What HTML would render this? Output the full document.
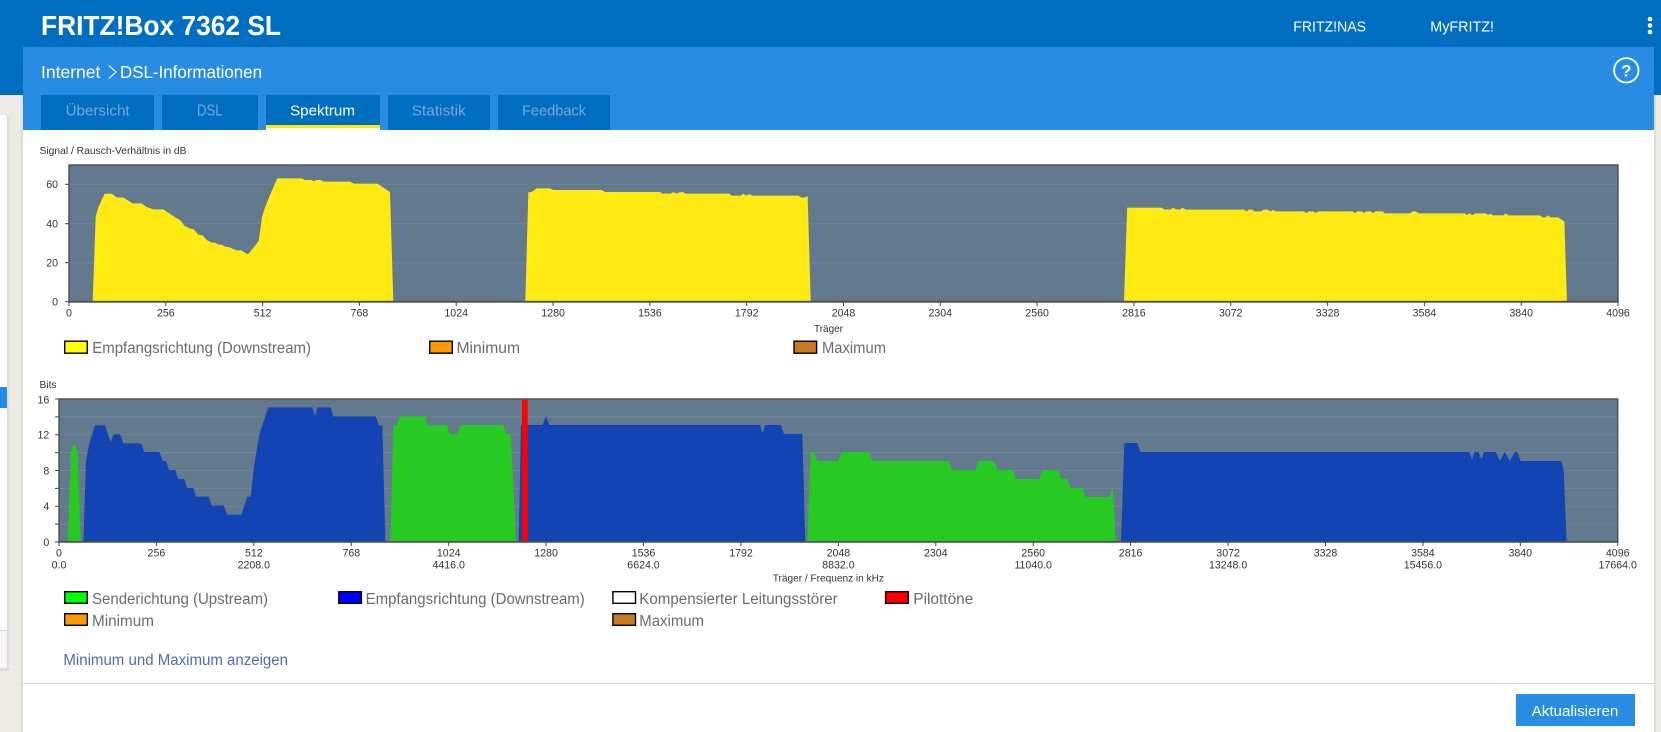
<!DOCTYPE html>
<html lang="de">
<head>
<meta charset="utf-8">
<title>FRITZ!Box 7362 SL</title>
<style>
html,body{margin:0;padding:0;width:1661px;height:732px;overflow:hidden;background:#edebe5}
svg{display:block;position:absolute;left:0;top:0}
text{font-family:"Liberation Sans",sans-serif}
.t{font-size:10.6px;fill:#333;text-anchor:middle}
.y{font-size:10.6px;fill:#333;text-anchor:end}
.s{font-size:10.2px;fill:#333}
.l{font-size:15.5px;fill:#6b6b6b}
.tab{font-size:15px;fill:#78a6d7}
.g{stroke:#71869a;stroke-width:1}
.k{stroke:#444;stroke-width:1}
.sw{stroke:#000;stroke-width:1.4}
</style>
</head>
<body>
<svg width="1661" height="732" viewBox="0 0 1661 732" xmlns="http://www.w3.org/2000/svg">
<defs>
<linearGradient id="sh" x1="0" x2="1" y1="0" y2="0"><stop offset="0" stop-color="#d8d6d0"/><stop offset="1" stop-color="#edebe5"/></linearGradient>
<linearGradient id="sh2" x1="1" x2="0" y1="0" y2="0"><stop offset="0" stop-color="#d8d6d0"/><stop offset="1" stop-color="#edebe5"/></linearGradient>
</defs>
<rect width="1661" height="732" fill="#edebe5"/>
<rect x="7" y="115" width="3" height="556" fill="url(#sh)"/>
<rect x="0" y="115" width="7" height="515" fill="#fff"/>
<rect x="0" y="630" width="7" height="38" fill="#f7f6f3"/>
<rect x="0" y="630" width="7" height="1" fill="#d8d8d8"/>
<rect x="0" y="668" width="10" height="3" fill="#dddbd5"/>
<rect x="0" y="387" width="7" height="21" fill="#288ce2"/>
<rect x="0" y="0" width="1661" height="95" fill="#006ec0"/>
<rect x="20" y="95" width="3" height="637" fill="url(#sh2)"/>
<rect x="1654" y="95" width="3" height="637" fill="url(#sh)"/>
<rect x="23" y="47" width="1631" height="83" fill="#288ce2"/>
<rect x="23" y="130" width="1631" height="602" fill="#fff"/>

<text x="41" y="35" font-size="28" font-weight="700" fill="#fff" textLength="240" lengthAdjust="spacingAndGlyphs">FRITZ!Box 7362 SL</text>
<text x="1293.3" y="31.3" font-size="15" fill="#fff" textLength="72.7" lengthAdjust="spacingAndGlyphs">FRITZ!NAS</text>
<text x="1430.3" y="31.3" font-size="15" fill="#fff" textLength="63.7" lengthAdjust="spacingAndGlyphs">MyFRITZ!</text>
<circle cx="1650" cy="19" r="2.3" fill="#fff"/><circle cx="1650" cy="25.5" r="2.3" fill="#fff"/><circle cx="1650" cy="32" r="2.3" fill="#fff"/>

<text x="41" y="78" font-size="17.5" fill="#fff" textLength="59.4" lengthAdjust="spacingAndGlyphs">Internet</text>
<path d="M108.9 65.5 L116 72 L108.9 78.5" fill="none" stroke="#fff" stroke-width="1.1"/>
<text x="120" y="78" font-size="17.5" fill="#fff" textLength="142" lengthAdjust="spacingAndGlyphs">DSL-Informationen</text>
<circle cx="1626.3" cy="70.3" r="12.2" fill="none" stroke="#fff" stroke-width="1.8"/>
<text x="1626.3" y="76.5" font-size="17" font-weight="700" fill="#fff" text-anchor="middle">?</text>

<rect x="41" y="95" width="113" height="35" fill="#006ec0"/>
<rect x="162" y="95" width="96" height="35" fill="#006ec0"/>
<rect x="266" y="95" width="114" height="33" fill="#006ec0"/>
<rect x="266" y="125" width="114" height="3" fill="#ffea00"/>
<rect x="266" y="128" width="114" height="2" fill="#fff"/>
<rect x="388" y="95" width="102" height="35" fill="#006ec0"/>
<rect x="498" y="95" width="112" height="35" fill="#006ec0"/>
<text class="tab" x="65.6" y="115.7" textLength="64" lengthAdjust="spacingAndGlyphs">Übersicht</text>
<text class="tab" x="197" y="115.7" font-size="16" style="font-size:16px" textLength="25.6" lengthAdjust="spacingAndGlyphs">DSL</text>
<text class="tab" x="290" y="115.7" style="fill:#fff" textLength="65" lengthAdjust="spacingAndGlyphs">Spektrum</text>
<text class="tab" x="411.6" y="115.7" textLength="54.2" lengthAdjust="spacingAndGlyphs">Statistik</text>
<text class="tab" x="522" y="115.7" textLength="64" lengthAdjust="spacingAndGlyphs">Feedback</text>

<!-- Chart 1 -->
<text class="s" x="39.5" y="154" textLength="147" lengthAdjust="spacingAndGlyphs">Signal / Rausch-Verhältnis in dB</text>
<rect x="69" y="165" width="1549" height="137" fill="#63798e"/>
<g class="g"><line x1="69" x2="1618" y1="184.3" y2="184.3"/><line x1="69" x2="1618" y1="223.7" y2="223.7"/><line x1="69" x2="1618" y1="262.7" y2="262.7"/></g>
<g fill="#ffea14">
<polygon transform="translate(30,130) scale(.33333)" points="188,515 197,260 205,232 215,210 224,191 245,191 260,202 280,203 308,220 335,220 350,231 370,238 400,238 425,255 452,272 463,287 480,296 490,297 505,314 518,316 530,330 545,338 555,338 565,344 575,344 585,350 600,352 610,357 620,361 635,361 650,372 657,370 686,333 696,262 705,232 720,195 742,145 815,145 825,150 845,150 852,154 860,150 872,150 880,155 960,155 972,161 1042,161 1058,171 1078,185 1080,186 1090,515"/>
<polygon transform="translate(440,150) scale(.33333)" points="256,455 265,127 275,126 290,115 330,115 340,120 485,120 495,126 660,126 668,131 692,131 700,126 710,131 718,127 728,126 738,131 868,131 875,137 903,137 910,131 918,137 928,132 938,137 1075,137 1085,143 1095,142 1103,138 1112,455"/>
<polygon transform="translate(1100,150) scale(.35778,.33333)" points="67,455 76,173 172,173 180,178 198,178 204,173 212,178 224,178 230,173 240,179 402,179 410,184 415,179 425,179 432,184 450,184 458,179 470,179 476,184 484,180 492,184 570,184 577,189 584,184 596,184 603,189 610,184 706,184 712,189 720,184 732,184 738,189 745,184 757,184 763,189 770,184 790,184 796,190 865,190 875,184 883,184 890,190 1020,190 1025,195 1033,190 1040,195 1050,190 1078,190 1085,195 1092,191 1098,196 1127,196 1134,190 1142,196 1230,196 1237,202 1245,202 1252,196 1260,202 1280,202 1296,213 1298,214 1305,455"/>
</g>
<rect x="69" y="300.8" width="1549" height="1.4" fill="#5f5d33"/>
<rect x="69" y="165" width="1549" height="137" fill="none" stroke="#4a4f55" stroke-width="1.4"/>
<g class="k">
<line x1="65" x2="69" y1="184.3" y2="184.3"/><line x1="65" x2="69" y1="223.7" y2="223.7"/><line x1="65" x2="69" y1="262.7" y2="262.7"/><line x1="65" x2="69" y1="301.7" y2="301.7"/>
<path fill="none" d="M69 302v4M165.8 302v4M262.6 302v4M359.4 302v4M456.2 302v4M553.1 302v4M649.9 302v4M746.7 302v4M843.5 302v4M940.3 302v4M1037.1 302v4M1133.9 302v4M1230.8 302v4M1327.6 302v4M1424.4 302v4M1521.2 302v4M1618 302v4"/>
</g>
<text class="y" x="58" y="188">60</text><text class="y" x="58" y="227.5">40</text><text class="y" x="58" y="266.5">20</text><text class="y" x="58" y="305.5">0</text>
<g>
<text class="t" x="69" y="316.7">0</text><text class="t" x="165.8" y="316.7">256</text><text class="t" x="262.6" y="316.7">512</text><text class="t" x="359.4" y="316.7">768</text><text class="t" x="456.2" y="316.7">1024</text><text class="t" x="553.1" y="316.7">1280</text><text class="t" x="649.9" y="316.7">1536</text><text class="t" x="746.7" y="316.7">1792</text><text class="t" x="843.5" y="316.7">2048</text><text class="t" x="940.3" y="316.7">2304</text><text class="t" x="1037.1" y="316.7">2560</text><text class="t" x="1133.9" y="316.7">2816</text><text class="t" x="1230.8" y="316.7">3072</text><text class="t" x="1327.6" y="316.7">3328</text><text class="t" x="1424.4" y="316.7">3584</text><text class="t" x="1521.2" y="316.7">3840</text><text class="t" x="1618" y="316.7">4096</text>
</g>
<text class="s" x="814" y="332" textLength="29" lengthAdjust="spacingAndGlyphs">Träger</text>

<rect class="sw" x="64.7" y="341.2" width="22.6" height="12" fill="#ffff00"/>
<text class="l" x="92.3" y="353" textLength="218.7" lengthAdjust="spacingAndGlyphs">Empfangsrichtung (Downstream)</text>
<rect class="sw" x="429.7" y="341.2" width="22.6" height="12" fill="#ff9900"/>
<text class="l" x="456.5" y="353" textLength="63.5" lengthAdjust="spacingAndGlyphs">Minimum</text>
<rect class="sw" x="794" y="341.2" width="22.6" height="12" fill="#c87a20"/>
<text class="l" x="822" y="353" textLength="64" lengthAdjust="spacingAndGlyphs">Maximum</text>

<!-- Chart 2 -->
<text class="s" x="39.5" y="388" textLength="17" lengthAdjust="spacingAndGlyphs">Bits</text>
<rect x="59" y="399" width="1558.7" height="143" fill="#63798e"/>
<g class="g">
<line x1="59" x2="1617.7" y1="416.9" y2="416.9"/><line x1="59" x2="1617.7" y1="434.8" y2="434.8"/><line x1="59" x2="1617.7" y1="452.6" y2="452.6"/><line x1="59" x2="1617.7" y1="470.5" y2="470.5"/><line x1="59" x2="1617.7" y1="488.4" y2="488.4"/><line x1="59" x2="1617.7" y1="506.3" y2="506.3"/><line x1="59" x2="1617.7" y1="524.1" y2="524.1"/>
</g>
<g transform="translate(30,350) scale(.33333)">
<polygon fill="#27c923" points="113,576 123,305 128,290 133,280 143,305 152,576"/>
<polygon fill="#1245b3" points="160,576 168,332 178,280 195,226 225,226 242,278 250,253 270,253 280,280 333,280 343,306 388,306 398,333 408,333 417,360 436,360 444,387 463,387 471,414 490,414 498,440 536,440 545,467 582,467 591,494 634,494 652,440 662,440 672,350 688,253 715,172 847,172 855,198 862,172 902,172 910,199 1037,199 1047,226 1057,226 1066,576"/>
</g>
<g transform="translate(440,370) scale(.33333)">
<polygon fill="#27c923" points="-149,516 -140,166 -130,166 -121,139 -45,139 -37,166 20,165 28,192 52,192 62,165 190,165 200,192 212,192 220,350 229,516"/>
<polygon fill="#1245b3" points="236,516 243,165 308,165 318,138 328,165 960,165 968,190 975,165 1022,165 1032,192 1087,192 1096,516"/>
</g>
<g transform="translate(800,370) scale(.33333)">
<polygon fill="#27c923" points="22,516 32,246 42,246 52,273 114,273 124,246 207,246 216,273 446,273 455,300 526,300 536,273 583,273 592,300 638,300 647,327 717,327 727,300 775,300 784,327 802,327 811,354 848,354 857,381 928,381 938,354 948,516"/>
</g>
<g transform="translate(1200,370) scale(.33333)">
<polygon fill="#1245b3" points="-237,516 -227,219 -188,219 -179,246 808,246 816,270 824,246 836,246 844,268 852,246 888,246 900,273 914,246 930,273 944,246 952,246 962,273 1083,273 1091,300 1100,516"/>
</g>
<rect x="522" y="399" width="5.7" height="143" fill="#ff0000"/>
<rect x="59" y="541.2" width="1558.7" height="1.4" fill="#1f5a3a"/>
<rect x="59" y="399" width="1558.7" height="143" fill="none" stroke="#4a4f55" stroke-width="1.4"/>
<g class="k">
<path fill="none" d="M55 399h4M55 416.9h4M55 434.8h4M55 452.6h4M55 470.5h4M55 488.4h4M55 506.3h4M55 524.1h4M55 542h4"/>
<path fill="none" d="M59 542v4M156.4 542v4M253.8 542v4M351.3 542v4M448.7 542v4M546.1 542v4M643.5 542v4M741 542v4M838.4 542v4M935.8 542v4M1033.2 542v4M1130.6 542v4M1228.1 542v4M1325.5 542v4M1422.9 542v4M1520.3 542v4M1617.7 542v4"/>
</g>
<text class="y" x="49.3" y="403.3">16</text><text class="y" x="49.3" y="438.5">12</text><text class="y" x="49.3" y="474.3">8</text><text class="y" x="49.3" y="510">4</text><text class="y" x="49.3" y="546">0</text>
<g>
<text class="t" x="59" y="556.7">0</text><text class="t" x="156.4" y="556.7">256</text><text class="t" x="253.8" y="556.7">512</text><text class="t" x="351.3" y="556.7">768</text><text class="t" x="448.7" y="556.7">1024</text><text class="t" x="546.1" y="556.7">1280</text><text class="t" x="643.5" y="556.7">1536</text><text class="t" x="741" y="556.7">1792</text><text class="t" x="838.4" y="556.7">2048</text><text class="t" x="935.8" y="556.7">2304</text><text class="t" x="1033.2" y="556.7">2560</text><text class="t" x="1130.6" y="556.7">2816</text><text class="t" x="1228.1" y="556.7">3072</text><text class="t" x="1325.5" y="556.7">3328</text><text class="t" x="1422.9" y="556.7">3584</text><text class="t" x="1520.3" y="556.7">3840</text><text class="t" x="1617.7" y="556.7">4096</text>
<text class="t" x="59" y="568.3">0.0</text><text class="t" x="253.8" y="568.3">2208.0</text><text class="t" x="448.7" y="568.3">4416.0</text><text class="t" x="643.5" y="568.3">6624.0</text><text class="t" x="838.4" y="568.3">8832.0</text><text class="t" x="1033.2" y="568.3">11040.0</text><text class="t" x="1228.1" y="568.3">13248.0</text><text class="t" x="1422.9" y="568.3">15456.0</text><text class="t" x="1617.7" y="568.3">17664.0</text>
</g>
<text class="s" x="772.7" y="581.7" textLength="111.3" lengthAdjust="spacingAndGlyphs">Träger / Frequenz in kHz</text>

<rect class="sw" x="64.7" y="591.7" width="22.6" height="11.6" fill="#00ff00"/>
<text class="l" x="92" y="604" textLength="176" lengthAdjust="spacingAndGlyphs">Senderichtung (Upstream)</text>
<rect class="sw" x="338.8" y="591.7" width="22.6" height="11.6" fill="#0000ff"/>
<text class="l" x="365.6" y="604" textLength="219.2" lengthAdjust="spacingAndGlyphs">Empfangsrichtung (Downstream)</text>
<rect class="sw" x="612.9" y="591.7" width="22.6" height="11.6" fill="#ffffff"/>
<text class="l" x="639.3" y="604" textLength="198.4" lengthAdjust="spacingAndGlyphs">Kompensierter Leitungsstörer</text>
<rect class="sw" x="885.6" y="591.7" width="22.6" height="11.6" fill="#ff0000"/>
<text class="l" x="913.3" y="604" textLength="60" lengthAdjust="spacingAndGlyphs">Pilottöne</text>
<rect class="sw" x="64.7" y="613.7" width="22.6" height="11.6" fill="#ff9900"/>
<text class="l" x="92" y="626" textLength="62" lengthAdjust="spacingAndGlyphs">Minimum</text>
<rect class="sw" x="612.9" y="613.7" width="22.6" height="11.6" fill="#c87a20"/>
<text class="l" x="639.3" y="626" textLength="64.7" lengthAdjust="spacingAndGlyphs">Maximum</text>

<text x="63.4" y="665" font-size="15.5" fill="#4a6ea9" textLength="224.6" lengthAdjust="spacingAndGlyphs">Minimum und Maximum anzeigen</text>
<rect x="23" y="683" width="1631" height="1" fill="#d5d5d5"/>
<rect x="1516" y="694" width="119" height="32" fill="#288ce2"/>
<text x="1531.7" y="716" font-size="15" fill="#fff" textLength="86.6" lengthAdjust="spacingAndGlyphs">Aktualisieren</text>
</svg>
</body>
</html>
